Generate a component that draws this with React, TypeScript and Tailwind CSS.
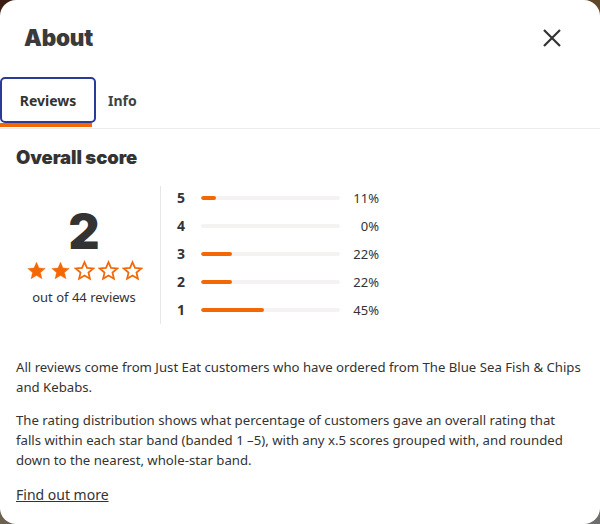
import React from "react";

const Star = ({ filled }: { filled: boolean }) => (
  <svg width="21" height="21" viewBox="0 0 24 24" className="shrink-0">
    <path
      d="M12 2.5l2.85 6.6 7.15.6-5.45 4.7 1.65 7-6.2-3.75-6.2 3.75 1.65-7L2 9.7l7.15-.6z"
      fill={filled ? "#f36805" : "none"}
      stroke="#f36805"
      strokeWidth={filled ? 0.5 : 2}
      strokeLinejoin="miter"
    />
  </svg>
);

const rows = [
  { n: 5, p: 11 },
  { n: 4, p: 0 },
  { n: 3, p: 22 },
  { n: 2, p: 22 },
  { n: 1, p: 45 },
];

const heavy = { fontFamily: 'Inter, sans-serif' };

export default function App() {
  return (
    <div className="w-[600px] h-[524px] bg-[linear-gradient(160deg,#3a1d10_0%,#6b5632_40%,#6d6d6d_100%)]">
      <div
        className="bg-white rounded-[16px] h-full flex flex-col text-[#242e30]"
        style={{ fontFamily: '"Noto Sans", sans-serif' }}
      >
        <div className="h-[76px] flex items-center justify-between pl-6 pr-[38px]">
          <h1 className="text-[22.5px] font-black text-[#3a3a3a] tracking-[-0.2px]" style={heavy}>
            About
          </h1>
          <svg width="20" height="20" viewBox="0 0 20 20">
            <path d="M2 2L18 18M18 2L2 18" stroke="#333" strokeWidth="2.2" />
          </svg>
        </div>
        <div className="flex items-start border-b border-[#ececec] h-[53px]">
          <div className="flex flex-col">
            <button className="mt-[1px] h-[46px] w-[96px] border-2 border-[#2b3a98] rounded-[5px] text-[14px] font-bold text-[#333]">
              Reviews
            </button>
            <div className="h-[4px] w-[92px] bg-[#f36805]" />
          </div>
          <button className="mt-[1px] h-[46px] px-[12px] text-[14px] font-bold text-[#3b4447]">
            Info
          </button>
        </div>
        <div className="px-4">
          <h2 className="mt-[16px] text-[18.5px] font-black leading-6 text-[#333] tracking-[-0.1px]" style={heavy}>
            Overall score
          </h2>
          <div className="mt-[15px] flex h-[140px]">
            <div className="w-[136px] flex flex-col items-center justify-center pt-[6px]">
              <div className="text-[48px] font-black leading-[50px] text-[#333]" style={heavy}>
                2
              </div>
              <div className="flex gap-[3px] mt-[3px]">
                <Star filled />
                <Star filled />
                <Star filled={false} />
                <Star filled={false} />
                <Star filled={false} />
              </div>
              <div className="text-[13px] leading-5 mt-[6px] text-[#333]">out of 44 reviews</div>
            </div>
            <div className="ml-[8px] mt-[2px] w-px bg-[#e6e6e6]" />
            <div className="pl-[16px] flex flex-col">
              {rows.map((r) => (
                <div key={r.n} className="h-[28px] flex items-center">
                  <div className="w-[24px] text-[14px] font-bold text-[#333] leading-none">{r.n}</div>
                  <div className="w-[139px] h-[4px] rounded-full bg-[#f5f3f1] overflow-hidden">
                    <div className="h-full rounded-full bg-[#f36805]" style={{ width: `${r.p}%` }} />
                  </div>
                  <div className="w-[39px] text-right text-[13px] text-[#333] leading-none">{r.p}%</div>
                </div>
              ))}
            </div>
          </div>
          <p className="mt-[33px] text-[13.2px] leading-5 text-[#333] whitespace-nowrap">
            All reviews come from Just Eat customers who have ordered from The Blue Sea Fish &amp; Chips
            <br />
            and Kebabs.
          </p>
          <p className="mt-[13px] text-[13.2px] leading-5 text-[#333] whitespace-nowrap">
            The rating distribution shows what percentage of customers gave an overall rating that
            <br />
            falls within each star band (banded 1 –5), with any x.5 scores grouped with, and rounded
            <br />
            down to the nearest, whole-star band.
          </p>
          <a className="block mt-[15px] text-[14px] leading-5 underline text-[#333]">Find out more</a>
        </div>
      </div>
    </div>
  );
}
